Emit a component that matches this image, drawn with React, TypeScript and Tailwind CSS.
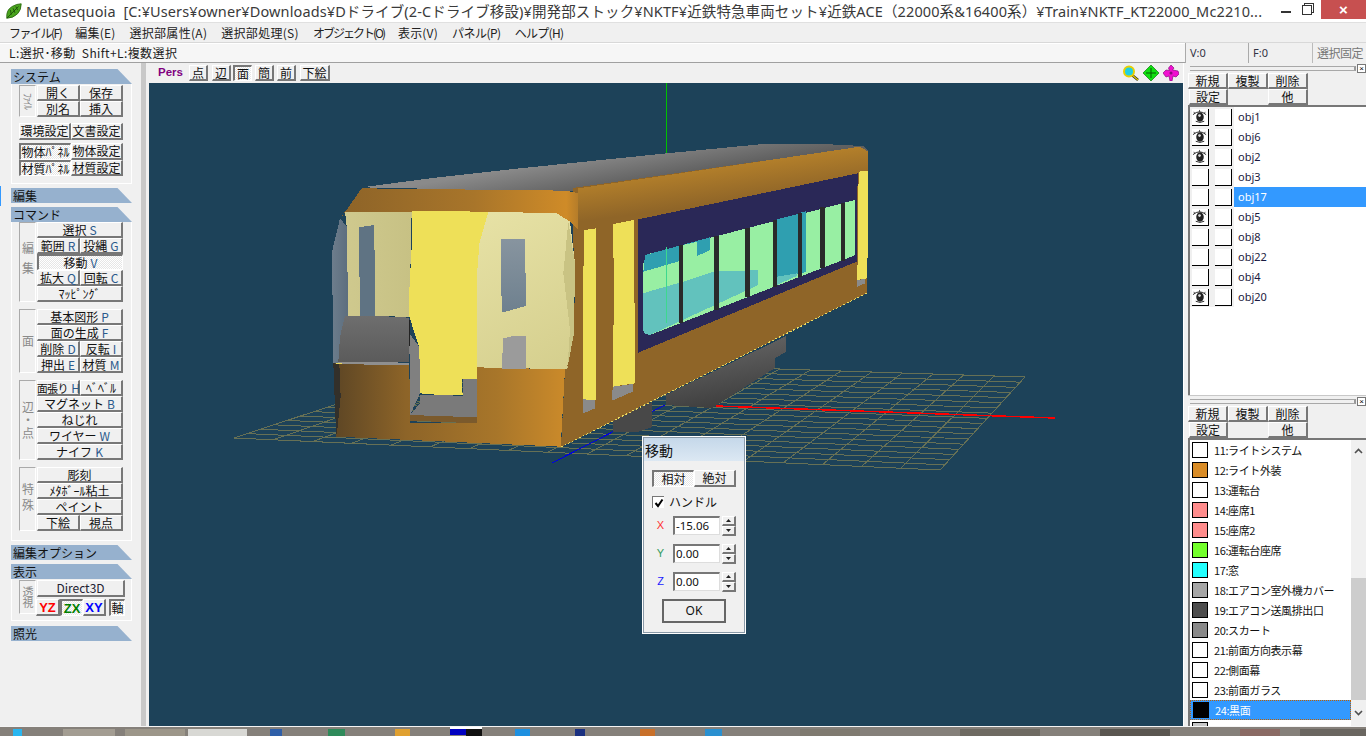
import React from "react";

const z7 = (s: string) =>
  s.split(" ").map((p) => { const [x, y] = p.split(",").map(Number); return `${x / 3 + 320},${y / 3 + 130}`; }).join(" ");
const z8 = (s: string) =>
  s.split(" ").map((p) => { const [x, y] = p.split(",").map(Number); return `${x / 3 + 620},${y / 3 + 130}`; }).join(" ");

function Btn({ children, className = "", active = false }: { children: React.ReactNode; className?: string; active?: boolean }) {
  const base = "flex items-center justify-center whitespace-nowrap text-[12px] leading-none text-[#111] box-border ";
  const look = active
    ? "border-t-2 border-l-2 border-t-[#777] border-l-[#777] border-b border-r border-b-white border-r-white bg-[repeating-conic-gradient(#ffffff_0_25%,#e6e6e6_0_50%)] bg-[length:2px_2px] "
    : "border-t border-l border-t-white border-l-white border-b-2 border-r-2 border-b-[#777] border-r-[#777] bg-[#f0f0f0] ";
  return <div className={base + look + className}>{children}</div>;
}

const K = ({ children }: { children: React.ReactNode }) => <span className="text-[#2b5a8c] ml-[3px] text-[12px]">{children}</span>;

function Head({ children }: { children: React.ReactNode }) {
  return (
    <div className="h-[15px] bg-[#96b1ce] text-[12px] leading-[15px] pl-[2px] text-[#111] [clip-path:polygon(0_0,88%_0,100%_100%,0_100%)]">
      {children}
    </div>
  );
}

function Label({ children, className = "" }: { children: React.ReactNode; className?: string }) {
  return (
    <div className={"w-[17px] mr-[1px] shrink-0 border-t border-l border-t-[#aaa] border-l-[#aaa] border-b border-r border-b-white border-r-white flex items-center justify-center text-[#8a8a8a] [writing-mode:vertical-rl] leading-none " + className}>
      {children}
    </div>
  );
}

const Row = ({ children }: { children: React.ReactNode }) => <div className="flex h-[16px]">{children}</div>;
const F = ({ children, active }: { children: React.ReactNode; active?: boolean }) => (
  <Row><Btn active={active} className="flex-1">{children}</Btn></Row>
);
const H = ({ a, b }: { a: React.ReactNode; b: React.ReactNode }) => (
  <Row><Btn className="w-[43px]">{a}</Btn><Btn className="flex-1">{b}</Btn></Row>
);

function LeftPanel() {
  return (
    <div className="relative w-[146px] shrink-0 pt-[6px] pl-[11px] border-r-[5px] border-r-[#c8c8c8] box-border">
      <div className="absolute left-0 top-[123px] w-[1px] h-[20px] bg-[#3399ff]" />
      <div className="w-[121px]">
        <Head>システム</Head>
        <div className="h-[100px] border-l border-r border-b border-white pl-[7px] pt-[1px] box-border">
          <div className="flex h-[32px]">
            <Label className="text-[10px] tracking-[-1px]">ﾌｧｲﾙ</Label>
            <div className="w-[86px]">
              <H a="開く" b="保存" />
              <H a="別名" b="挿入" />
            </div>
          </div>
          <div className="flex h-[17px] mt-[6px] w-[104px]">
            <Btn className="w-[52px]">環境設定</Btn>
            <Btn className="w-[52px]">文書設定</Btn>
          </div>
          <div className="flex h-[33px] mt-[3px] w-[104px]">
            <div className="w-[52px]">
              <Btn active className="h-[17px]">物体ﾊﾟﾈﾙ</Btn>
              <Btn active className="h-[16px]">材質ﾊﾟﾈﾙ</Btn>
            </div>
            <div className="w-[52px]">
              <Btn className="h-[17px]">物体設定</Btn>
              <Btn className="h-[16px]">材質設定</Btn>
            </div>
          </div>
        </div>
        <div className="mt-[4px]"><Head>編集</Head></div>
        <div className="mt-[4px]"><Head>コマンド</Head></div>
        <div className="h-[319px] border-l border-r border-b border-white pl-[7px] box-border flex flex-col gap-[7px]">
          <div className="flex h-[80px]">
            <Label className="text-[12px] tracking-[8px]">編集</Label>
            <div className="w-[86px]">
              <F>選択<K>S</K></F>
              <H a={<>範囲<K>R</K></>} b={<>投縄<K>G</K></>} />
              <F active>移動<K>V</K></F>
              <H a={<>拡大<K>Q</K></>} b={<>回転<K>C</K></>} />
              <F>ﾏｯﾋﾟﾝｸﾞ</F>
            </div>
          </div>
          <div className="flex h-[64px]">
            <Label className="text-[12px]">面</Label>
            <div className="w-[86px]">
              <F>基本図形<K>P</K></F>
              <F>面の生成<K>F</K></F>
              <H a={<>削除<K>D</K></>} b={<>反転<K>I</K></>} />
              <H a={<>押出<K>E</K></>} b={<>材質<K>M</K></>} />
            </div>
          </div>
          <div className="flex h-[80px]">
            <Label className="text-[12px] tracking-[1px]">辺・点</Label>
            <div className="w-[86px]">
              <H a={<span className="text-[11px] tracking-[-0.5px]">面張り<K>H</K></span>} b={<span>ﾍﾞﾍﾞﾙ</span>} />
              <F>マグネット<K>B</K></F>
              <F>ねじれ</F>
              <F>ワイヤー<K>W</K></F>
              <F>ナイフ<K>K</K></F>
            </div>
          </div>
          <div className="flex h-[64px]">
            <Label className="text-[12px] tracking-[4px]">特殊</Label>
            <div className="w-[86px]">
              <F>彫刻</F>
              <F>ﾒﾀﾎﾞｰﾙ粘土</F>
              <F>ペイント</F>
              <H a="下絵" b="視点" />
            </div>
          </div>
        </div>
        <div className="mt-[4px]"><Head>編集オプション</Head></div>
        <div className="mt-[4px]"><Head>表示</Head></div>
        <div className="h-[42px] border-l border-r border-b border-white pl-[7px] pt-[1px] box-border flex">
          <Label className="text-[11px] h-[34px]">透視</Label>
          <div className="w-[88px]">
            <Btn className="h-[17px] w-[88px] text-[#223]">Direct3D</Btn>
            <div className="flex mt-[2px] h-[17px] font-['Liberation_Sans',sans-serif] font-bold">
              <Btn className="w-[24px] ml-[-1px] text-[13px]"><span className="text-[#ff0000]">YZ</span></Btn>
              <Btn active className="w-[23px] text-[13px]"><span className="text-[#008000]">ZX</span></Btn>
              <Btn className="w-[23px] text-[13px]"><span className="text-[#0000ff]">XY</span></Btn>
              <Btn active className="w-[16px] ml-[3px] font-normal font-['Noto_Sans_CJK_JP',sans-serif]">軸</Btn>
            </div>
          </div>
        </div>
        <div className="mt-[5px]"><Head>照光</Head></div>
      </div>
    </div>
  );
}

function Scene() {
  const L = [234, 438], Fa = [473, 359], R = [1025, 377], N = [940, 470];
  const lines: number[][] = [];
  const mix = (a: number[], b: number[], t: number) => [a[0] + (b[0] - a[0]) * t, a[1] + (b[1] - a[1]) * t];
  for (let i = 0; i <= 18; i++) {
    const t = i / 18;
    const a = mix(Fa, L, t), b = mix(R, N, t);
    lines.push([a[0], a[1], b[0], b[1]]);
  }
  for (let i = 0; i <= 18; i++) {
    const t = i / 18;
    const a = mix(Fa, R, t), b = mix(L, N, t);
    lines.push([a[0], a[1], b[0], b[1]]);
  }
  const pillars: [number, number, number][] = [[183, 345, 580], [289, 318, 540], [383, 295, 500], [465, 270, 470], [540, 250, 440], [608, 232, 415], [669, 218, 392]];
  return (
    <svg viewBox="149 83 1034 643" className="block w-full h-full" shapeRendering="crispEdges">
      <defs>
        <linearGradient id="roof" gradientUnits="userSpaceOnUse" x1="620" y1="150" x2="626" y2="185">
          <stop offset="0" stopColor="#8a8a8a" /><stop offset="1" stopColor="#5f5f5f" />
        </linearGradient>
        <linearGradient id="band" gradientUnits="userSpaceOnUse" x1="345" y1="0" x2="578" y2="0">
          <stop offset="0" stopColor="#8e6428" /><stop offset="0.55" stopColor="#a8752a" /><stop offset="0.95" stopColor="#cf8b28" /><stop offset="1" stopColor="#b57d2a" />
        </linearGradient>
        <linearGradient id="low" gradientUnits="userSpaceOnUse" x1="337" y1="0" x2="566" y2="0">
          <stop offset="0" stopColor="#5f4725" /><stop offset="0.3" stopColor="#8d6428" /><stop offset="0.7" stopColor="#a8762a" /><stop offset="0.98" stopColor="#c9892a" />
        </linearGradient>
        <linearGradient id="sideband" gradientUnits="userSpaceOnUse" x1="700" y1="160" x2="706" y2="205">
          <stop offset="0" stopColor="#bb852b" /><stop offset="1" stopColor="#8f6528" />
        </linearGradient>
        <linearGradient id="cream" gradientUnits="userSpaceOnUse" x1="470" y1="215" x2="560" y2="370">
          <stop offset="0" stopColor="#e7e2a6" /><stop offset="1" stopColor="#d5cf8e" />
        </linearGradient>
        <linearGradient id="creamL" gradientUnits="userSpaceOnUse" x1="345" y1="0" x2="412" y2="0">
          <stop offset="0" stopColor="#cfc98e" /><stop offset="1" stopColor="#c7c184" />
        </linearGradient>
        <linearGradient id="darkL" gradientUnits="userSpaceOnUse" x1="332" y1="0" x2="352" y2="0">
          <stop offset="0" stopColor="#6d7d8c" /><stop offset="1" stopColor="#586a7b" />
        </linearGradient>
        <linearGradient id="win" gradientUnits="userSpaceOnUse" x1="520" y1="240" x2="520" y2="310">
          <stop offset="0" stopColor="#87949f" /><stop offset="1" stopColor="#6f818f" />
        </linearGradient>
        <linearGradient id="box" gradientUnits="userSpaceOnUse" x1="680" y1="360" x2="690" y2="410">
          <stop offset="0" stopColor="#5e5e5e" /><stop offset="1" stopColor="#404040" />
        </linearGradient>
        <linearGradient id="lamp" gradientUnits="userSpaceOnUse" x1="0" y1="316" x2="0" y2="362">
          <stop offset="0" stopColor="#6e6e6e" /><stop offset="1" stopColor="#5b5b5b" />
        </linearGradient>
      </defs>
      <rect x="149" y="83" width="1034" height="643" fill="#1d4259" />
      {lines.map((l, i) => <line key={i} x1={l[0]} y1={l[1]} x2={l[2]} y2={l[3]} stroke="#667055" strokeWidth="1" />)}
      <line x1="552" y1="463" x2="665" y2="405" stroke="#0000e0" strokeWidth="1" />
      <line x1="716" y1="406" x2="1055" y2="418" stroke="#ff0000" strokeWidth="1.5" />
      <line x1="666.5" y1="83" x2="666.5" y2="160" stroke="#00c000" strokeWidth="1" />

      <polygon points="666,395 666,405 712,408 775,368 775,358 786,352 786,336" fill="url(#box)" />
      <polygon points="613,420 613,432 638,432 652,427 652,402" fill="#484848" />

      <polygon points={z7("125,172 330,145 600,115 1020,72") + " " + z8("430,42 610,42 730,48 745,62 0,160") + " " + z7("740,185")} fill="url(#roof)" />

      <polygon points="573,188 860,147 868,152 867,293 561,447 565,369 575,300 573,230" fill="#8f6528" />
      <polygon points={z7("775,175") + " " + z8("720,50 745,65 745,125 713,130 55,268 0,275 0,270") + " " + z7("775,300")} fill="url(#sideband)" />

      <polygon points={z7("125,175 740,182 775,190 775,300 750,275 710,250 75,245 60,268")} fill="url(#band)" />

      <polygon points={z7("45,700 268,705 270,880 470,880 470,712 735,718 722,950 48,920")} fill="url(#low)" />
      <polygon points={z7("40,700 58,702 62,800 50,920 46,860")} fill="#33302a" />

      <polygon points={z7("60,265 80,290 85,558 62,610 55,700 40,700 36,365")} fill="url(#darkL)" />
      <polygon points={z7("75,245 275,245 268,560 85,558 80,290")} fill="url(#creamL)" />
      <polygon points={z7("505,245 710,250 750,275 765,400 762,610 740,718 470,712 470,450 478,340")} fill="url(#cream)" />
      <polygon points={z7("745,275 765,400 762,610 742,716 750,600 730,430")} fill="#c9c383" />
      <polygon points={z7("275,243 505,245 478,340 470,450 470,748 425,748 428,795 360,795 300,790 297,650 268,560 268,480 275,350")} fill="#eee058" />
      <polygon points={z7("117,292 162,285 165,430 165,560 120,560 118,400")} fill="#5f7383" />
      <polygon points={z7("543,328 615,327 618,528 545,548")} fill="url(#win)" />
      <polygon points={z7("550,625 585,617 618,617 618,718 545,716")} fill="#9b9b9b" />
      <polygon points={z7("75,558 250,560 268,565 268,695 55,695 60,620")} fill="url(#lamp)" />
      <polygon points={z7("55,695 268,698 268,706 50,702")} fill="#8f8f8f" />
      <polygon points={z7("268,610 298,650 300,790 270,855")} fill="#808080" />
      <polygon points={z7("300,795 428,797 428,748 470,748 470,862 270,855 300,820")} fill="#7a7a7a" />
      <polygon points={z7("270,855 470,862 470,880 270,872")} fill="#7b5a2c" />
      <line x1="409" y1="320" x2="409" y2="346" stroke="#222" strokeWidth="1" />

      <polygon points={z7("792,300 828,295 827,810 790,808 788,600")} fill="#eee058" />
      <polygon points={z7("879,282 942,270 945,760 878,770 882,480")} fill="#eee058" />
      <polygon points={z7("790,808 825,810 825,835 790,850")} fill="#8a8a8a" />
      <polygon points={z7("878,770 940,762 938,785 876,812")} fill="#8a8a8a" />

      <polygon points={z8("55,268 713,130 710,395 55,668")} fill="#2a2857" />
      <polygon points={z8("70,400 85,372 705,210 705,375 695,380 90,615 72,610 68,590")} fill="#98efa3" />
      <polygon points={z8("70,425 75,375 270,322 270,360 232,378 232,335 190,345 190,390")} fill="#2f9fb0" />
      <polygon points={z8("470,268 535,252 535,430 470,448")} fill="#2f9fb0" />
      <polygon points={z8("535,250 557,244 557,425 535,435")} fill="#2f9fb0" />
      <polygon points={z8("68,490 190,455 280,425 415,420 415,465 90,615 72,610 68,590")} fill="#62c2bd" />
      <polygon points={z8("470,440 530,430 530,438 470,465")} fill="#62c2bd" />
      {pillars.map((p, i) => (
        <rect key={i} x={(p[0] - 7) / 3 + 620} y={p[1] / 3 + 130} width="4.5" height={(p[2] - p[1]) / 3} fill="#2a2a2a" />
      ))}
      <line x1="666.5" y1="247" x2="666.5" y2="323" stroke="#3dd88f" strokeWidth="1" />

      <polygon points={z8("716,125 745,122 742,445 712,450")} fill="#eee058" />
      <polygon points={z8("712,450 735,447 735,460 712,470")} fill="#8a8a8a" />
      <line x1="561" y1="447" x2="867" y2="293" stroke="#e8d860" strokeWidth="1" strokeDasharray="2 2" />
      <line x1="336" y1="363" x2="342" y2="363" stroke="#e8d860" strokeWidth="1" />
    </svg>
  );
}

function Eye() {
  return (
    <svg viewBox="0 0 17 17" className="w-[16px] h-[16px]">
      <path d="M1 6 Q8 0 15 6" fill="none" stroke="#222" strokeWidth="1" />
      <path d="M3 5 L2 3 M8 3 L8 1 M13 5 L14 3" stroke="#222" strokeWidth="0.8" />
      <ellipse cx="8.5" cy="8.5" rx="4" ry="5" fill="#222" />
      <circle cx="8" cy="7" r="1.4" fill="#ddd" />
      <path d="M4 13 Q8.5 15.5 13 13" fill="none" stroke="#222" strokeWidth="1" />
    </svg>
  );
}

const Grip = () => (
  <div className="flex h-[9px] items-center pl-[2px] mt-[1px]">
    <div className="w-[166px] h-[5px] border-t border-b border-[#a8a8a8] border-r-[2px] border-r-[#999]" />
    <div className="w-[9px] h-[9px] ml-[1px] bg-white border border-[#777] flex items-center justify-center text-[8px] leading-none text-black font-['Liberation_Sans',sans-serif]">×</div>
  </div>
);

function PanelButtons() {
  return (
    <div className="w-[120px]">
      <div className="flex h-[16px]">
        <Btn className="w-[40px]">新規</Btn><Btn className="w-[40px]">複製</Btn><Btn className="w-[40px]">削除</Btn>
      </div>
      <div className="flex h-[16px] pl-[1px]">
        <Btn className="w-[39px]">設定</Btn><div className="w-[40px]" /><Btn className="w-[40px]">他</Btn>
      </div>
    </div>
  );
}

function ObjList() {
  const items: [string, boolean, boolean][] = [
    ["obj1", true, false], ["obj6", true, false], ["obj2", true, false], ["obj3", false, false], ["obj17", false, true],
    ["obj5", true, false], ["obj8", false, false], ["obj22", false, false], ["obj4", false, false], ["obj20", true, false],
  ];
  return (
    <div className="h-[290px] border-t-2 border-l-2 border-t-[#777] border-l-[#777] bg-white box-border">
      {items.map(([n, eye, sel]) => (
        <div key={n} className="flex h-[20px]">
          <div className="w-[44px] shrink-0 bg-[#f0f0f0] flex items-center pl-[2px] gap-[6px]">
            <div className="w-[17px] h-[17px] bg-white border-r border-b border-black flex items-center justify-center">{eye && <Eye />}</div>
            <div className="w-[17px] h-[17px] bg-white border-r border-b border-black" />
          </div>
          <div className={"flex-1 pl-[4px] text-[11px] leading-[20px] font-['Noto_Sans',sans-serif] " + (sel ? "bg-[#3399ff] text-white" : "bg-white text-[#1a1a40]")}>{n}</div>
        </div>
      ))}
    </div>
  );
}

function MatList() {
  const items: [string, string, string][] = [
    ["11", "ライトシステム", "bg-white"], ["12", "ライト外装", "bg-[#d98c26]"], ["13", "運転台", "bg-white"], ["14", "座席1", "bg-[#ff8c8c]"],
    ["15", "座席2", "bg-[#ff8c8c]"], ["16", "運転台座席", "bg-[#73ff2a]"], ["17", "窓", "bg-[#22ffff]"], ["18", "エアコン室外機カバー", "bg-[#a5a5a5]"],
    ["19", "エアコン送風排出口", "bg-[#4d4d4d]"], ["20", "スカート", "bg-[#8a8a8a]"], ["21", "前面方向表示幕", "bg-white"], ["22", "側面幕", "bg-white"],
    ["23", "前面ガラス", "bg-white"], ["24", "黒面", "bg-black"],
  ];
  return (
    <div className="h-[288px] border-t-2 border-l-2 border-t-[#777] border-l-[#777] bg-white flex overflow-hidden box-border">
      <div className="flex-1 overflow-hidden">
        {items.map(([n, t, c]) => {
          const sel = n === "24";
          return (
            <div key={n} className={"flex items-center h-[20px] pl-[2px] text-[11px] whitespace-nowrap box-border " + (sel ? "bg-[#3399ff] text-white border border-dotted border-[#c06000] pl-[1px]" : "text-[#111]")}>
              <div className={"w-[16px] h-[16px] border border-black shrink-0 " + c} />
              <span className="ml-[6px] tracking-[-0.4px]">{n}:{t}</span>
            </div>
          );
        })}
        <div className="h-[6px] pl-[2px] overflow-hidden pt-[2px]"><div className="w-[16px] h-[16px] border border-black bg-[#c8c8c8]" /></div>
      </div>
      <div className="w-[15px] shrink-0 bg-[#f0f0f0] flex flex-col">
        <div className="h-[22px] flex items-center justify-center">
          <svg width="9" height="6" viewBox="0 0 9 6"><path d="M1 5 L4.5 1.5 L8 5" fill="none" stroke="#505050" strokeWidth="1.6" /></svg>
        </div>
        <div className="h-[116px]" />
        <div className="h-[122px] bg-[#cdcdcd]" />
        <div className="h-[26px] flex items-center justify-center">
          <svg width="9" height="6" viewBox="0 0 9 6"><path d="M1 1 L4.5 4.5 L8 1" fill="none" stroke="#505050" strokeWidth="1.6" /></svg>
        </div>
      </div>
    </div>
  );
}

function Spin() {
  return (
    <div className="ml-[2px] w-[14px]">
      <Btn className="h-[10px] w-[14px]"><svg width="5" height="3" viewBox="0 0 5 3"><path d="M2.5 0 L5 3 H0 Z" fill="#222" /></svg></Btn>
      <Btn className="h-[10px] w-[14px]"><svg width="5" height="3" viewBox="0 0 5 3"><path d="M0 0 H5 L2.5 3 Z" fill="#222" /></svg></Btn>
    </div>
  );
}

function Num({ label, color, value, mt }: { label: string; color: string; value: string; mt: string }) {
  return (
    <div className={"flex items-center h-[19px] " + mt}>
      <span className={"w-[30px] text-center text-[11px] pl-[5px] font-['Liberation_Sans',sans-serif] " + color}>{label}</span>
      <div className="w-[47px] h-[19px] bg-white border-t-2 border-l-2 border-t-[#777] border-l-[#777] border-b border-r border-b-[#ddd] border-r-[#ddd] text-[11.5px] leading-[16px] pl-[1px] font-['Noto_Sans',sans-serif] text-[#111] box-border">{value}</div>
      <Spin />
    </div>
  );
}

function Dialog() {
  return (
    <div className="absolute left-[642px] top-[436px] w-[104px] h-[198px] bg-[#f0f0f0] border border-white outline outline-1 outline-[#8a9aa8] outline-offset-[-2px] box-border">
      <div className="h-[24px] bg-gradient-to-b from-[#c4d7e9] to-[#dce8f3] text-[14px] leading-[26px] pl-[2px] text-[#111]">移動</div>
      <div className="flex mt-[9px] ml-[9px] h-[17px]">
        <Btn active className="w-[42px]">相対</Btn>
        <Btn className="w-[42px]">絶対</Btn>
      </div>
      <div className="flex items-center mt-[8px] ml-[9px] h-[14px] text-[12px] text-[#111]">
        <div className="w-[12px] h-[12px] bg-white border-t border-l border-[#777] flex items-center justify-center">
          <svg width="10" height="10" viewBox="0 0 10 10"><path d="M1.5 5 L4 8 L8.5 1.5" fill="none" stroke="#000" strokeWidth="2" /></svg>
        </div>
        <span className="ml-[5px]">ハンドル</span>
      </div>
      <Num label="X" color="text-[#ff3030]" value="-15.06" mt="mt-[7px]" />
      <Num label="Y" color="text-[#2f9a5a]" value="0.00" mt="mt-[9px]" />
      <Num label="Z" color="text-[#2020ff]" value="0.00" mt="mt-[9px]" />
      <div className="mt-[8px] ml-[19px] w-[64px] h-[24px] border-2 border-[#666] flex items-center justify-center text-[12px] text-[#111] font-['Noto_Sans',sans-serif]">
        OK
      </div>
    </div>
  );
}

function Taskbar() {
  const blocks: [number, number, string][] = [
    [13, 9, "#29b6f0"], [63, 52, "#a39d92"], [125, 60, "#9c9689"], [188, 59, "#d8d8d4"], [270, 12, "#2f5fa8"], [328, 17, "#2f8a5a"],
    [395, 15, "#e0a030"], [450, 32, "#0000c0"], [515, 15, "#1e90e0"], [575, 10, "#1a3080"], [640, 15, "#c8702a"], [705, 17, "#2a90d0"],
    [800, 60, "#7f7a70"], [960, 80, "#6e6a62"], [1100, 70, "#5a5650"], [1240, 40, "#8a6a64"], [1300, 66, "#6a6660"],
  ];
  return (
    <svg viewBox="0 0 1366 10" className="block w-full h-[10px] shrink-0" shapeRendering="crispEdges">
      <rect width="1366" height="10" fill="#85807a" />
      <rect width="1366" height="1" fill="#f4f4f4" />
      {blocks.map(([x, w, c], i) => <rect key={i} x={x} y={i === 7 ? 2 : 3} width={w} height="7" fill={c} />)}
      <rect x="450" y="1" width="32" height="2" fill="#ffffff" />
      <rect x="466" y="3" width="16" height="7" fill="#101010" />
    </svg>
  );
}

export default function App() {
  const menus: [string, string][] = [
    ["ファイル(F)", "tracking-[-1.5px]"], ["編集(E)", "tracking-[0.2px]"], ["選択部属性(A)", "tracking-[0.3px]"], ["選択部処理(S)", "tracking-[0.3px]"],
    ["オブジェクト(O)", "tracking-[-2px]"], ["表示(V)", "tracking-[0.2px]"], ["パネル(P)", "tracking-[-0.5px]"], ["ヘルプ(H)", "tracking-[-0.7px]"],
  ];
  const vbtn = "h-[16px]";
  return (
    <div className="relative w-[1366px] h-[736px] overflow-hidden flex flex-col bg-[#f0f0f0] font-['Noto_Sans_CJK_JP',sans-serif]">
      <div className="h-[22px] shrink-0 bg-white flex items-center relative">
        <svg viewBox="0 0 20 20" className="w-[18px] h-[18px] ml-[5px] shrink-0">
          <path d="M2 18 Q1 9 8 5 Q13 2 18 2 Q18 9 14 13 Q9 18 2 18 Z" fill="#4aa51e" stroke="#2a6a10" strokeWidth="1" />
          <path d="M2 18 L15 5 M6 9 L7 14 M9 7 L11 12 M12 5 L14 9" stroke="#1d4f0a" strokeWidth="1" fill="none" />
        </svg>
        <div className="ml-[3px] w-[1245px] text-[14.5px] leading-[22px] whitespace-nowrap text-[#3a3a3a] font-['Noto_Sans','Noto_Sans_CJK_JP',sans-serif] tracking-[0.12px]">
          Metasequoia&nbsp; [C:¥Users¥owner¥Downloads¥Dドライブ(2-Cドライブ移設)¥開発部ストック¥NKTF¥近鉄特急車両セット¥近鉄ACE（22000系&amp;16400系）¥Train¥NKTF_KT22000_Mc2210...
        </div>
        <div className="ml-auto flex items-start h-[22px] self-start">
          <div className="w-[10px] h-[2px] bg-[#333] mt-[11px] mr-[11px]" />
          <div className="relative w-[10px] h-[10px] mt-[5px] mr-[9px] border border-[#333] bg-white shadow-[2px_-2px_0_-1px_#fff,2px_-2px_0_0_#333]" />
          <div className="w-[45px] h-[19px] bg-[#c75050] flex items-center justify-center text-white text-[15px] leading-none font-['Liberation_Sans',sans-serif] font-bold">×</div>
        </div>
      </div>
      <div className="h-[20px] shrink-0 flex items-center pl-[9px] gap-[14px] text-[12px] text-[#222] border-t border-[#e0e0e0]">
        {menus.map(([m, c]) => <span key={m} className={c}>{m}</span>)}
      </div>
      <div className="h-[21px] shrink-0 flex text-[12px] text-[#222] border-t border-[#d8d8d8]">
        <div className="w-[1185px] border-t border-white pl-[9px] leading-[18px] tracking-[0.4px] bg-white/40 border-b border-b-[#a0a0a0]">L:選択･移動&nbsp; Shift+L:複数選択</div>
        <div className="w-[63px] pl-[4px] text-[11px] leading-[19px] border-l border-[#aaa] font-['Noto_Sans',sans-serif] text-[#334]">V:0</div>
        <div className="w-[64px] pl-[4px] text-[11px] leading-[19px] border-l border-[#aaa] font-['Noto_Sans',sans-serif] text-[#334]">F:0</div>
        <div className="flex-1 pl-[4px] leading-[19px] border-l border-[#bbb] whitespace-nowrap text-[#777] tracking-[-0.5px]">選択固定</div>
      </div>
      <div className="flex-1 flex min-h-0">
        <LeftPanel />
        <div className="w-[3px] shrink-0 bg-[#f0f0f0]" />
        <div className="w-[1034px] shrink-0 flex flex-col">
          <div className="h-[20px] shrink-0 flex items-center pl-[9px] bg-[#f0f0f0]">
            <span className="w-[31px] shrink-0 text-[11.5px] font-bold text-[#800080] font-['Liberation_Sans',sans-serif]">Pers</span>
            <Btn className={"w-[19px] mr-[4px] " + vbtn}>点</Btn>
            <Btn className={"w-[19px] mr-[2px] " + vbtn}>辺</Btn>
            <Btn active className={"w-[19px] mr-[3px] " + vbtn}>面</Btn>
            <Btn className={"w-[19px] mr-[3px] " + vbtn}>簡</Btn>
            <Btn className={"w-[19px] mr-[4px] " + vbtn}>前</Btn>
            <Btn className={"w-[30px] " + vbtn}>下絵</Btn>
            <div className="ml-auto flex items-center gap-[4px] pr-[4px]">
              <svg width="17" height="16" viewBox="0 0 17 16">
                <line x1="10" y1="10" x2="16" y2="15" stroke="#222" strokeWidth="2.5" />
                <line x1="10" y1="10" x2="16" y2="15" stroke="#e8d000" strokeWidth="1.2" />
                <circle cx="7" cy="6.5" r="5" fill="#20d0e0" stroke="#e8d000" strokeWidth="2" />
              </svg>
              <svg width="16" height="16" viewBox="0 0 16 16">
                <path d="M8 0 L16 8 L8 16 L0 8 Z" fill="#10e010" stroke="#0a7a0a" strokeWidth="0.7" />
                <path d="M8 3 V13 M3 8 H13" stroke="#055a05" strokeWidth="1" />
              </svg>
              <svg width="16" height="16" viewBox="0 0 16 16">
                <path d="M8 0 L11 3 L9.5 5 L15 6 L16 9 L13 12 L10 11 L9 16 L7 16 L6 11 L3 12 L0 8 L3 5 L6.5 5.5 L5.5 3 Z" fill="#f010d0" stroke="#8a0a80" strokeWidth="0.7" />
                <circle cx="8" cy="8" r="1.5" fill="#8a0a80" />
              </svg>
            </div>
          </div>
          <div className="flex-1 min-h-0"><Scene /></div>
        </div>
        <div className="w-[5px] shrink-0 border-l border-white bg-[#f0f0f0]" />
        <div className="flex-1 min-w-0 flex flex-col">
          <div className="h-[332px] shrink-0">
            <Grip />
            <PanelButtons />
            <ObjList />
          </div>
          <div className="flex-1 min-h-0 border-t border-t-[#c8c8c8]">
            <Grip />
            <PanelButtons />
            <MatList />
          </div>
        </div>
      </div>
      <Taskbar />
      <Dialog />
    </div>
  );
}
